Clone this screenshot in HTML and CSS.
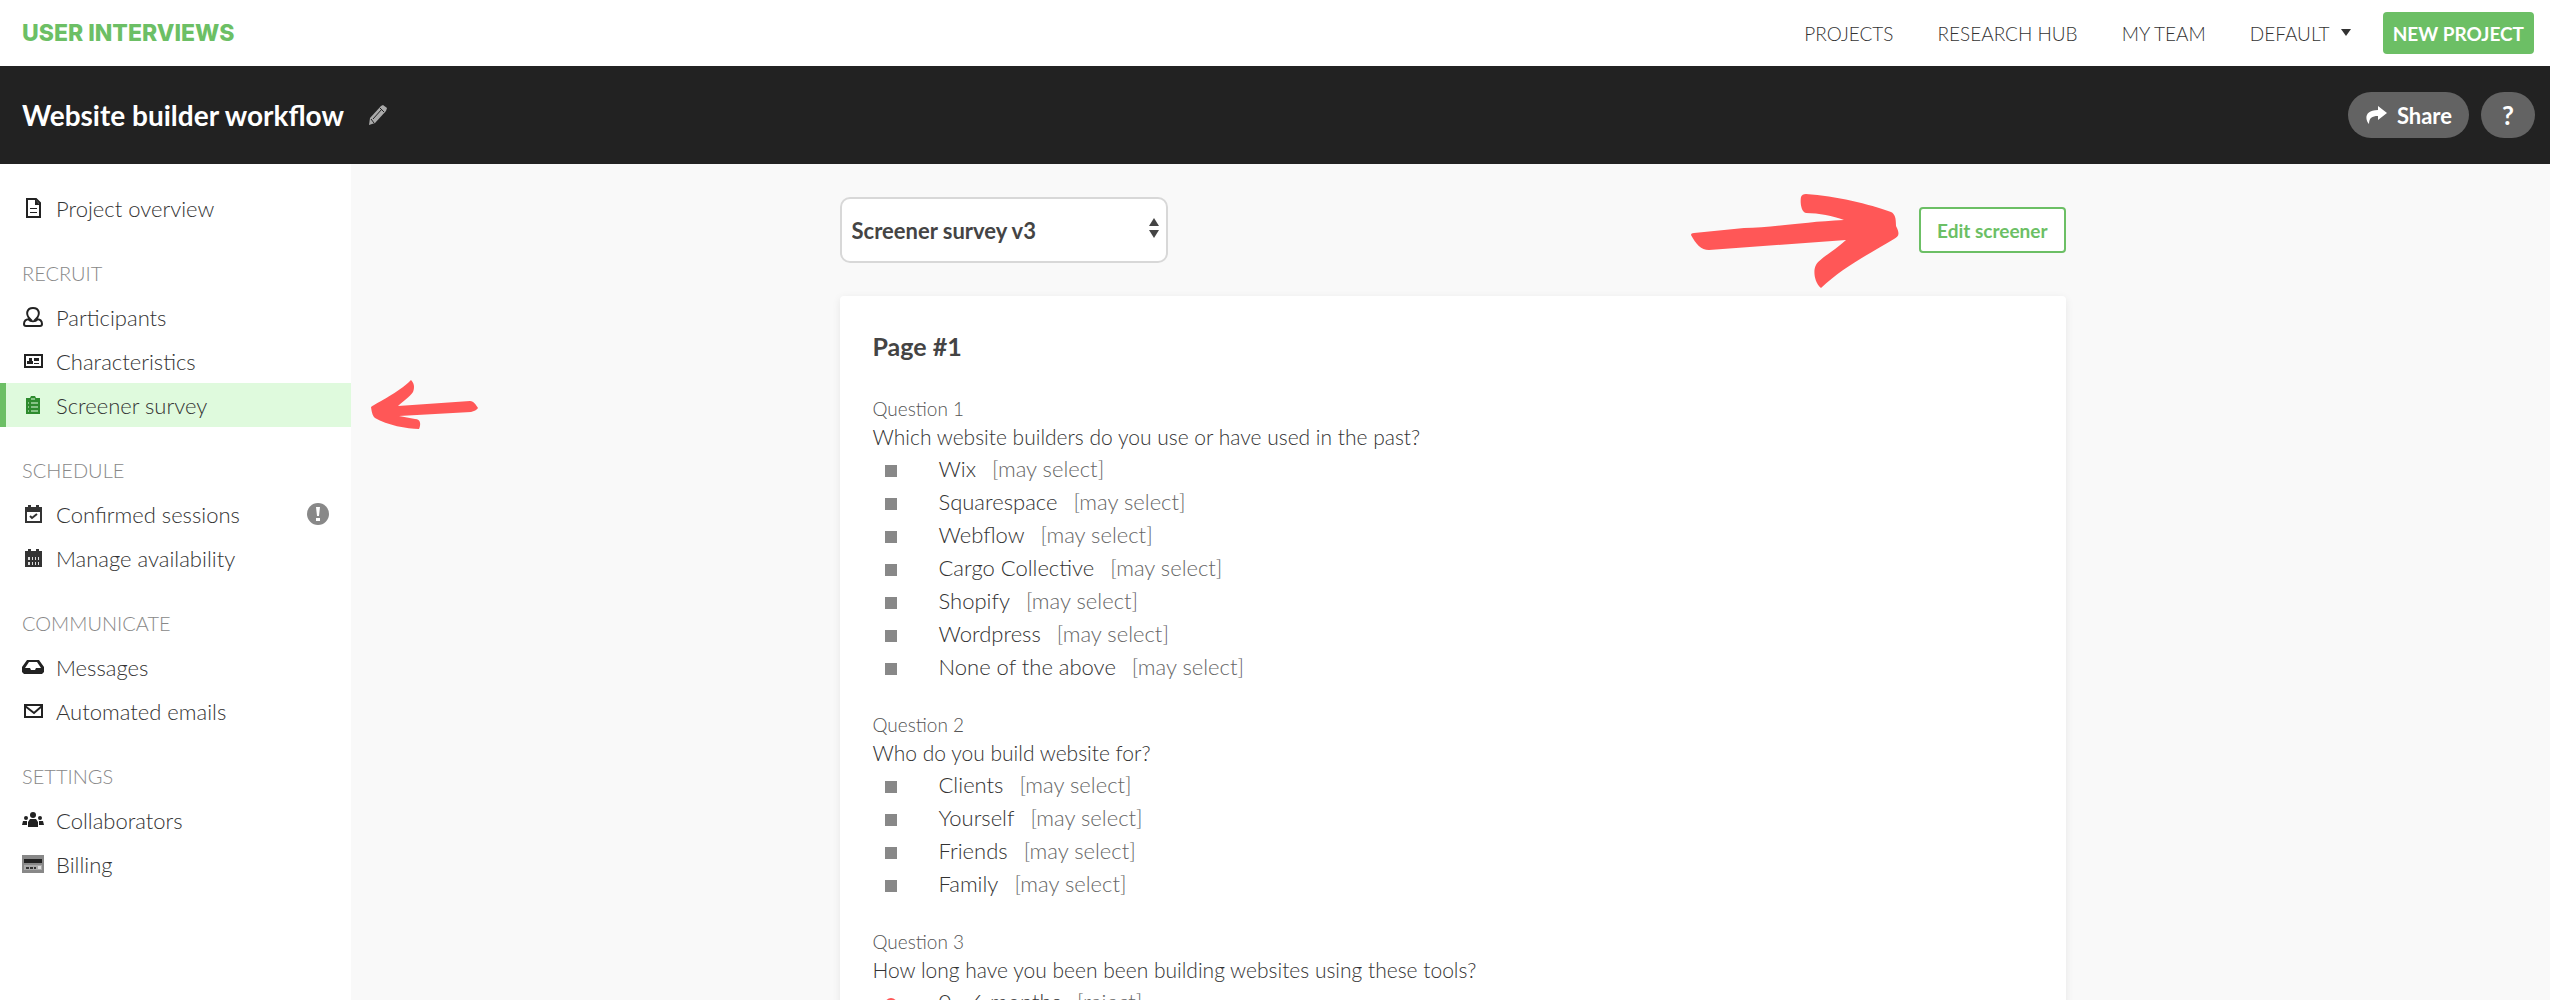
FILE: index.html
```html
<!DOCTYPE html>
<html lang="en">
<head>
    <meta charset="utf-8">
    <title>Website builder workflow</title>
    <link rel="stylesheet" href="styles.css">
</head>
<body>
    <header class="topbar">
        <a class="brand" href="#">USER INTERVIEWS</a>
        <nav class="topnav">
            <a href="#">PROJECTS</a>
            <a href="#">RESEARCH HUB</a>
            <a href="#">MY TEAM</a>
            <a class="dropdown" href="#">DEFAULT</a>
        </nav>
        <button class="btn-new" type="button">NEW PROJECT</button>
    </header>

    <div class="project-bar">
        <h1>Website builder workflow</h1>
        <button class="btn-rename" type="button" aria-label="Rename project">
            <svg viewBox="0 0 20 22" width="20" height="22"><path d="M1 21l1-7L13 2l2-1 4 3-1 3L7 19z" fill="#aaa"/><path d="M5 15L14 5M12 4l4 4M3 15l3 4" stroke="#222" stroke-width="1" fill="none"/></svg>
        </button>
        <div class="project-actions">
            <button class="pill" type="button">
                <svg viewBox="0 0 22 18" width="22" height="18"><path d="M13 0l9 7-9 7v-4C7 10 4 12 4 18 0 14-1 4 13 4z" fill="#fff"/></svg>
                Share
            </button>
            <button class="pill pill-help" type="button">?</button>
        </div>
    </div>

    <div class="layout">
        <nav class="sidebar">
            <a class="item" href="#">
                <svg class="icon" viewBox="0 0 22 20"><path d="M5 1h9l4 4v14H5z" fill="none" stroke="#222" stroke-width="2"/><path d="M13 1v6h5zM8 10h7v1H8zM8 14h7v1H8z" fill="#222"/></svg>
                Project overview
            </a>

            <h2>RECRUIT</h2>
            <a class="item" href="#">
                <svg class="icon" viewBox="0 0 22 20"><path d="M8 12C3 7 5 1 11 1s8 6 3 11c4 0 6 2 6 5 0 1-1 2-2 2H4c-1 0-2-1-2-2 0-3 2-5 6-5zM6 12c3 3 7 3 10 0" fill="none" stroke="#222" stroke-width="2"/></svg>
                Participants
            </a>
            <a class="item" href="#">
                <svg class="icon" viewBox="0 0 22 20"><path d="M3 4h17v12H3z" fill="none" stroke="#222" stroke-width="2"/><path d="M7 7h3v3h1v3H5v-3h2zM12 7h5v3h-5zM12 12h5v1h-5z" fill="#222"/></svg>
                Characteristics
            </a>
            <a class="item active" href="#">
                <svg class="icon" viewBox="0 0 22 20"><path d="M4 3h4l1-2h4l1 2h4v16H4z" fill="#2e8b2e"/><path d="M6 8h1M9 8h7M6 12h1M9 12h7M6 16h1M9 16h7M9 4h4" stroke="#dffadd" stroke-width="1"/></svg>
                Screener survey
                <svg class="arrow arrow-left" viewBox="0 0 107 50" width="107" height="50"><path d="M40 0c3 3 4 7 2 12-3 5-10 9-15 14l72-5c4 0 6 4 8 7-1 2-4 3-7 4l-18 1-54 3 16 3c6 0 6 6 4 10-12 0-32-4-44-11-2-2-3-4-4-11C7 22 27 13 40 0z" fill="#ff5757"/></svg>
            </a>

            <h2>SCHEDULE</h2>
            <a class="item" href="#">
                <svg class="icon" viewBox="0 0 22 20"><path d="M3 3h3V1h3v2h5V1h3v2h3v16H3z" fill="#333"/><path d="M5 8h13v9H5z" fill="#fff"/><path d="M8 12l2 2 5-4" stroke="#333" stroke-width="2" fill="none"/></svg>
                Confirmed sessions
                <svg class="alert" viewBox="0 0 22 22" width="22" height="22"><circle cx="11" cy="11" r="11" fill="#888"/><path d="M9 4h4l-1 9h-2zM9 15h4v3H9z" fill="#fff"/></svg>
            </a>
            <a class="item" href="#">
                <svg class="icon" viewBox="0 0 22 20"><path d="M3 3h3V1h3v2h5V1h3v2h3v16H3z" fill="#333"/><path d="M6 9h2v3H6zM10 9h1v3h-1zM13 9h1v3h-1zM16 9h1v3h-1zM6 14h2v3H6zM10 14h1v3h-1zM13 14h1v3h-1zM16 14h1v3h-1z" fill="#ddd"/></svg>
                Manage availability
            </a>

            <h2>COMMUNICATE</h2>
            <a class="item" href="#">
                <svg class="icon" viewBox="0 0 22 20"><path d="M5 3h12l5 7v5l-2 2H2l-2-2v-5zM7 5l-4 6h5l1 2h4l1-2h5l-4-6z" fill="#222" fill-rule="evenodd"/></svg>
                Messages
            </a>
            <a class="item" href="#">
                <svg class="icon" viewBox="0 0 22 20"><path d="M3 4h17v12H3z" fill="none" stroke="#222" stroke-width="2"/><path d="M3 5l9 7 8-7" fill="none" stroke="#222" stroke-width="2"/></svg>
                Automated emails
            </a>

            <h2>SETTINGS</h2>
            <a class="item" href="#">
                <svg class="icon" viewBox="0 0 22 20"><circle cx="11" cy="5" r="3" fill="#222"/><circle cx="4" cy="8" r="2" fill="#222"/><circle cx="18" cy="8" r="2" fill="#222"/><path d="M6 17v-5l2-3h6l2 3v5zM0 15l1-4h4v4zM22 15l-1-4h-4v4z" fill="#222"/></svg>
                Collaborators
            </a>
            <a class="item" href="#">
                <svg class="icon" viewBox="0 0 22 20"><path d="M0 1h22v18H0z" fill="#888"/><path d="M2 5h18v4H2z" fill="#222"/><path d="M2 11h18v5H2z" fill="#aaa"/><path d="M4 14h10" stroke="#333" stroke-width="2" stroke-dasharray="3 1"/><path d="M16 12h3v3h-3z" fill="#ddd"/></svg>
                Billing
            </a>
        </nav>

        <main class="content">
            <div class="column">
                <div class="toolbar">
                    <div class="select-wrap">
                        <select aria-label="Screener version">
                            <option>Screener survey v3</option>
                        </select>
                        <svg class="updown" viewBox="0 0 10 20" width="10" height="20"><path d="M5 0l5 8H0zM0 12h10l-5 8z" fill="#444"/></svg>
                    </div>
                    <div class="edit-wrap">
                        <svg class="arrow arrow-right" viewBox="0 0 208 95" width="208" height="95"><path d="M115 0C145 2 178 10 200 18C204 20 205 24 205 32C209 40 208 42 203 45C174 62 150 75 130 94C123 88 122 76 125 71C128 65 143 57 155 46L18 56C10 56 5 50 0 41Q0 39 3 39L53 34C80 34 110 28 153 26C142 22 128 19 115 19C110 18 109 8 110 3Q111 0 115 0Z" fill="#ff5757"/></svg>
                        <button class="btn-edit" type="button">Edit screener</button>
                    </div>
                </div>

                <section class="card">
                    <h3>Page #1</h3>

                    <div class="question">
                        <p class="number">Question 1</p>
                        <p class="prompt">Which website builders do you use or have used in the past?</p>
                        <ul>
                            <li>Wix <span>[may select]</span></li>
                            <li>Squarespace <span>[may select]</span></li>
                            <li>Webflow <span>[may select]</span></li>
                            <li>Cargo Collective <span>[may select]</span></li>
                            <li>Shopify <span>[may select]</span></li>
                            <li>Wordpress <span>[may select]</span></li>
                            <li>None of the above <span>[may select]</span></li>
                        </ul>
                    </div>

                    <div class="question">
                        <p class="number">Question 2</p>
                        <p class="prompt">Who do you build website for?</p>
                        <ul>
                            <li>Clients <span>[may select]</span></li>
                            <li>Yourself <span>[may select]</span></li>
                            <li>Friends <span>[may select]</span></li>
                            <li>Family <span>[may select]</span></li>
                        </ul>
                    </div>

                    <div class="question">
                        <p class="number">Question 3</p>
                        <p class="prompt">How long have you been been building websites using these tools?</p>
                        <ul>
                            <li class="reject">0 - 6 months <span>[reject]</span></li>
                        </ul>
                    </div>
                </section>
            </div>
        </main>
    </div>
</body>
</html>
```
FILE: styles.css
```css
* {
    box-sizing: border-box;
}
body {
    margin: 0;
    height: 100vh;
    overflow: hidden;
    display: flex;
    flex-direction: column;
    font-family: Lato, "Liberation Sans", sans-serif;
    font-size: 22px;
    font-weight: 300;
    color: #333;
    background: #f9f9f9;
}
a {
    color: inherit;
    text-decoration: none;
}
button, select {
    font: inherit;
    cursor: pointer;
}
h1, h2, h3, p, ul {
    margin: 0;
    padding: 0;
}

/* top navigation */
.topbar {
    flex: none;
    display: flex;
    align-items: center;
    height: 66px;
    padding: 0 16px 0 22px;
    background: #fff;
}
.brand {
    font-family: Inter, sans-serif;
    font-size: 23px;
    font-weight: 800;
    color: #6cbf65;
}
.topnav {
    display: flex;
    gap: 44px;
    margin-left: auto;
    margin-right: 32px;
    font-size: 19px;
}
.dropdown {
    display: flex;
    gap: 11px;
}
.dropdown::after {
    content: "";
    margin-top: 7px;
    border: 5px solid transparent;
    border-top: 7px solid #333;
    border-bottom: 0;
    height: 0;
}
.btn-new {
    height: 42px;
    padding: 0 10px;
    border: 0;
    border-radius: 4px;
    background: #6cbf65;
    color: #fff;
    font-size: 19px;
    font-weight: 700;
}

/* dark project bar */
.project-bar {
    flex: none;
    display: flex;
    align-items: center;
    height: 98px;
    padding: 0 15px 0 22px;
    background: #222;
    color: #fff;
}
.project-bar h1 {
    font-size: 28px;
    font-weight: 700;
}
.btn-rename {
    display: flex;
    margin-left: 24px;
    padding: 0;
    border: 0;
    background: none;
}
.project-actions {
    display: flex;
    gap: 12px;
    margin-left: auto;
}
.pill {
    display: flex;
    align-items: center;
    justify-content: center;
    gap: 10px;
    height: 46px;
    padding: 0 17px;
    border: 0;
    border-radius: 23px;
    background: #636363;
    color: #fff;
    font-size: 22px;
    font-weight: 700;
}
.pill-help {
    width: 54px;
    padding: 0;
    font-size: 26px;
}

.layout {
    flex: 1;
    min-height: 0;
    display: flex;
}

/* sidebar */
.sidebar {
    flex: none;
    width: 351px;
    padding-top: 22px;
    background: #fff;
}
.sidebar h2 {
    margin-top: 21px;
    padding-left: 22px;
    font-size: 20px;
    font-weight: 300;
    line-height: 44px;
    color: #888;
}
.item {
    position: relative;
    display: flex;
    align-items: center;
    gap: 12px;
    height: 44px;
    padding: 0 22px 0 16px;
    border-left: 6px solid transparent;
}
.icon {
    width: 22px;
    height: 20px;
}
.active {
    border-left-color: #6cbf65;
    background: #dffadd;
}
.alert {
    margin-left: auto;
}

/* hand-drawn pointers */
.arrow {
    position: absolute;
}
.arrow-left {
    left: 100%;
    margin-left: 20px;
}
.arrow-right {
    right: 100%;
    top: -13px;
    margin-right: 20px;
}

/* screener */
.content {
    flex: 1;
    padding: 33px 24px 0 28px;
}
.column {
    max-width: 1226px;
    margin: 0 auto;
}
.toolbar {
    display: flex;
    align-items: center;
    justify-content: space-between;
}
.select-wrap, .edit-wrap {
    position: relative;
}
.select-wrap select {
    appearance: none;
    width: 328px;
    height: 66px;
    padding: 0 10px;
    border: 2px solid #d8d8d8;
    border-radius: 10px;
    background: #fff;
    color: #444;
    font-weight: 700;
}
.updown {
    position: absolute;
    top: 21px;
    right: 9px;
    pointer-events: none;
}
.btn-edit {
    height: 46px;
    padding: 0 16px;
    border: 2px solid #6cbf65;
    border-radius: 4px;
    background: #fff;
    color: #6cbf65;
    font-size: 19px;
    font-weight: 700;
}
.card {
    margin-top: 33px;
    padding: 33px;
    border-radius: 4px;
    background: #fff;
    box-shadow: 0 2px 8px rgba(0, 0, 0, 0.08);
}
.card h3 {
    margin-bottom: 32px;
    font-size: 25px;
    font-weight: 700;
    line-height: 34px;
    color: #444;
}
.question {
    margin-bottom: 28px;
}
.number {
    font-size: 19px;
    line-height: 28px;
    color: #555;
}
.prompt {
    margin-bottom: 1px;
    font-size: 21px;
    line-height: 28px;
}
.question ul {
    list-style: none;
}
.question li {
    display: flex;
    align-items: center;
    padding-left: 12px;
    line-height: 33px;
}
.question li::before {
    content: "";
    width: 12px;
    height: 12px;
    margin-top: 4px;
    margin-right: 42px;
    background: #888;
}
.question li.reject::before {
    border-radius: 50%;
    background: #ff5757;
}
.question li span {
    margin-left: 16px;
    color: #666;
}
```
